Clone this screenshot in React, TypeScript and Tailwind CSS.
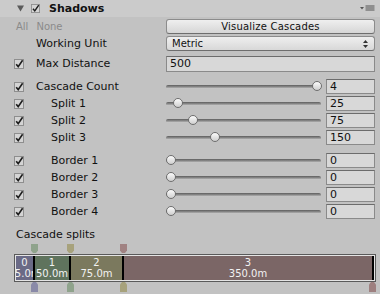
import React from "react";

function Check({ size = 10 }: { size?: number }) {
  return (
    <svg width={size} height={size} viewBox="0 0 10 10" className="block">
      <rect x="0.5" y="0.5" width="9" height="9" fill="#d4d4d4" stroke="#8e8e8e" />
      <path d="M2.2 5.2 L4.2 7.6 L8.6 1.2" fill="none" stroke="#1c1c1c" strokeWidth="1.6" />
    </svg>
  );
}

function Field({ value, className = "" }: { value: string; className?: string }) {
  return (
    <div
      className={
        "h-[15px] border border-[#8a8a8a] border-t-[#6c6c6c] bg-[#d8d8d8] pl-[3px] leading-[13px] text-[11px] text-[#111] " +
        className
      }
    >
      {value}
    </div>
  );
}

function Slider({ frac, value }: { frac: number; value: string }) {
  return (
    <div className="flex items-center h-full">
      <div className="relative w-[155px] h-[15px] flex items-center">
        <div className="w-full h-[4px] rounded-full bg-gradient-to-b from-[#5e5e5e] via-[#8e8e8e] to-[#d6d6d6]" />
        <div
          className="absolute top-[2px] w-[10px] h-[10px] rounded-full border border-[#6e6e6e] bg-gradient-to-b from-[#fbfbfb] to-[#cfcfcf]"
          style={{ left: `${Math.round(frac * 146)}px` }}
        />
      </div>
      <Field value={value} className="ml-[5px] w-[49px]" />
    </div>
  );
}

function Row({
  label,
  indent = false,
  check = true,
  mt,
  children,
}: {
  label: string;
  indent?: boolean;
  check?: boolean;
  mt: string;
  children: React.ReactNode;
}) {
  return (
    <div className={"flex h-[15px] items-center " + mt}>
      <div className="w-[166px] flex items-center pl-[14px]">
        <div className="w-[10px] h-[10px]">{check ? <Check /> : null}</div>
        <span className={(indent ? "ml-[27px]" : "ml-[12px]") + " leading-[15px]"}>{label}</span>
      </div>
      <div className="w-[209px] h-full">{children}</div>
    </div>
  );
}

const segments = [
  { w: 19, color: "bg-[#6a6a86]", idx: "0", dist: "25.0m" },
  { w: 36, color: "bg-[#5f735d]", idx: "1", dist: "50.0m" },
  { w: 53, color: "bg-[#7b795e]", idx: "2", dist: "75.0m" },
  { w: 250, color: "bg-[#7b6666]", idx: "3", dist: "350.0m" },
];

function HandleDown({ color }: { color: string }) {
  return (
    <svg width="7" height="9" viewBox="0 0 7 9" className="block">
      <polygon points="0,0 7,0 7,6.5 5,9 2,9 0,6.5" fill={color} />
    </svg>
  );
}
function HandleUp({ color }: { color: string }) {
  return (
    <svg width="7" height="10" viewBox="0 0 7 10" className="block">
      <polygon points="2,0 5,0 7,2.5 7,10 0,10 0,2.5" fill={color} />
    </svg>
  );
}

export default function App() {
  const splits = [
    { label: "Split 1", v: 25 },
    { label: "Split 2", v: 75 },
    { label: "Split 3", v: 150 },
  ];
  return (
    <div className="w-[380px] h-[294px] overflow-hidden bg-[#c2c2c2] text-[11px] text-[#111] font-['DejaVu_Sans',sans-serif]">
      {/* header */}
      <div className="h-[17px] bg-[#cbcbcb] flex items-center pl-[17px] pr-[5px]">
        <svg width="7" height="7" viewBox="0 0 7 7" className="block">
          <polygon points="0,0.5 7,0.5 3.5,6.5" fill="#5a5a5a" />
        </svg>
        <div className="ml-[7px]">
          <Check size={9} />
        </div>
        <span className="ml-[9px] font-bold text-[11px] leading-[17px] text-[#111]">Shadows</span>
        <div className="ml-auto flex items-center">
          <svg width="15" height="7" viewBox="0 0 15 7" className="block">
            <polygon points="0,2 4,2 2,4.5" fill="#555" />
            <rect x="5.5" y="0.5" width="9" height="1" fill="#555" />
            <rect x="5.5" y="2.5" width="9" height="1" fill="#555" />
            <rect x="5.5" y="4.5" width="9" height="1" fill="#555" />
          </svg>
        </div>
      </div>

      {/* All / None + button */}
      <div className="flex h-[15px] items-center mt-[2px]">
        <div className="w-[166px] pl-[16px] text-[10px] text-[#8a8a8a] leading-[15px]">
          All<span className="ml-[8px]">None</span>
        </div>
        <button className="w-[209px] h-[15px] rounded-[3px] border border-[#8c8c8c] border-b-[#6e6e6e] bg-gradient-to-b from-[#efefef] to-[#d6d6d6] text-[10px] leading-[13px] text-[#111] tracking-[0.2px]">
          Visualize Cascades
        </button>
      </div>

      {/* Working Unit */}
      <Row label="Working Unit" check={false} mt="mt-[2px]">
        <div className="h-[15px] rounded-[3px] border border-[#8c8c8c] border-b-[#6e6e6e] bg-gradient-to-b from-[#efefef] to-[#d8d8d8] flex items-center pl-[5px] pr-[6px]">
          <span className="text-[10px] leading-[13px]">Metric</span>
          <svg width="5" height="8" viewBox="0 0 5 8" className="ml-auto block">
            <polygon points="0,3 5,3 2.5,0" fill="#333" />
            <polygon points="0,5 5,5 2.5,8" fill="#333" />
          </svg>
        </div>
      </Row>

      {/* Max Distance */}
      <Row label="Max Distance" mt="mt-[5px]">
        <Field value="500" className="h-[16px] leading-[14px]" />
      </Row>

      {/* Cascade count + splits */}
      <Row label="Cascade Count" mt="mt-[8px]">
        <Slider frac={1} value="4" />
      </Row>
      {splits.map((s) => (
        <Row key={s.label} label={s.label} indent mt="mt-[2px]">
          <Slider frac={s.v / 500} value={String(s.v)} />
        </Row>
      ))}

      {/* Borders */}
      {[1, 2, 3, 4].map((b, i) => (
        <Row key={b} label={`Border ${b}`} indent mt={i === 0 ? "mt-[8px]" : "mt-[2px]"}>
          <Slider frac={0} value="0" />
        </Row>
      ))}

      {/* Cascade splits */}
      <div className="mt-[9px] pl-[16px] h-[13px] leading-[13px] text-[11px]">Cascade splits</div>
      <div className="relative ml-[14px] mt-[3px] w-[362px] h-[49px]">
        {/* top handles */}
        <div className="absolute left-[17px] top-0"><HandleDown color="#8fa38c" /></div>
        <div className="absolute left-[53px] top-0"><HandleDown color="#a7a27c" /></div>
        <div className="absolute left-[106px] top-0"><HandleDown color="#a08282" /></div>

        <div className="absolute left-0 top-[10px] w-[362px] h-[28px] border border-[#5a5a5a]">
          <div className="w-full h-full border border-[#e4e4e4] flex">
            {segments.map((s) => (
              <div
                key={s.idx}
                className={"h-full overflow-hidden flex flex-col items-center justify-center border-r-2 border-black text-[10px] leading-[11px] text-[#f2f2f2] whitespace-nowrap " + s.color}
                style={{ width: `${s.w}px` }}
              >
                <span>{s.idx}</span>
                <span>{s.dist}</span>
              </div>
            ))}
          </div>
        </div>

        {/* bottom handles */}
        <div className="absolute left-[17px] top-[38px]"><HandleUp color="#8a8aa8" /></div>
        <div className="absolute left-[53px] top-[38px]"><HandleUp color="#8fa38c" /></div>
        <div className="absolute left-[106px] top-[38px]"><HandleUp color="#a7a27c" /></div>
        <div className="absolute left-[355px] top-[38px]"><HandleUp color="#9e8080" /></div>
      </div>
    </div>
  );
}
